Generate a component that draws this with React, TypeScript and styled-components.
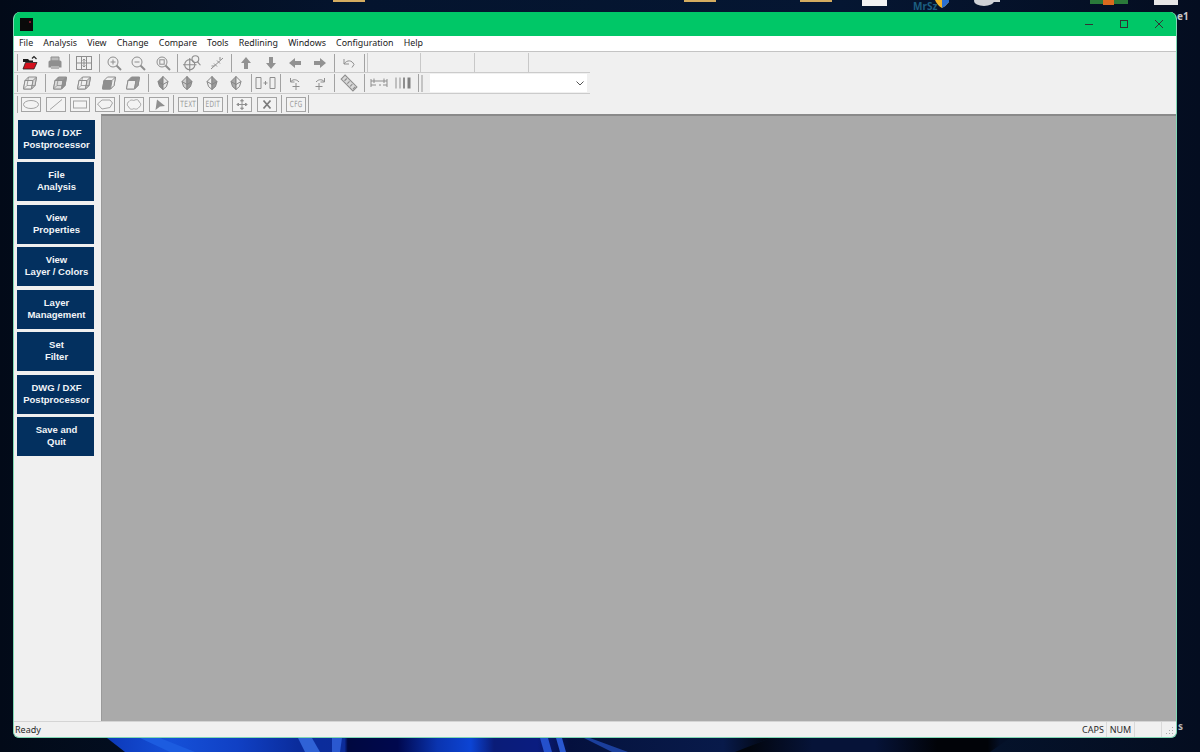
import React from "react";
import styled, { createGlobalStyle } from "styled-components";

const Global = createGlobalStyle`
  html, body { margin: 0; padding: 0; height: 100%; background: #040f26; overflow: hidden; }
  #root { height: 100%; }
`;

const Desktop = styled.div`
  position: relative;
  width: 1200px;
  height: 752px;
  box-sizing: border-box;
  padding: 12px 23px 14px 13px;
  background: linear-gradient(90deg, #020a18 0%, #04142e 30%, #051632 70%, #040d20 100%);
  overflow: hidden;
  font-family: "Noto Sans", "Open Sans", sans-serif;
`;

const DesktopArt = styled.svg`
  position: absolute;
  left: 0;
  top: 0;
  width: 1200px;
  height: 752px;
`;

const DesktopLabel = styled.span<{ $x: number; $y: number; $c: string }>`
  position: absolute;
  left: ${(p) => p.$x}px;
  top: ${(p) => p.$y}px;
  color: ${(p) => p.$c};
  font-size: 10px;
  line-height: 10px;
  font-weight: 700;
`;

const Window = styled.div`
  position: relative;
  height: 100%;
  display: flex;
  flex-direction: column;
  box-sizing: border-box;
  border: 1px solid #7fd8b4;
  border-top: 0;
  border-radius: 7px 7px 6px 6px;
  background: #f0f0f0;
  overflow: hidden;
`;

const TitleBar = styled.div`
  height: 24px;
  flex: none;
  background: #00c767;
  display: flex;
  align-items: center;
  padding-left: 6px;
`;

const AppLogo = styled.svg`
  width: 13px;
  height: 13px;
`;

const WinButtons = styled.div`
  margin-left: auto;
  display: flex;
`;

const WinButton = styled.div`
  width: 35px;
  height: 24px;
  display: flex;
  align-items: center;
  justify-content: center;
  svg { width: 10px; height: 10px; }
`;

const MenuBar = styled.div`
  height: 15px;
  flex: none;
  background: #fff;
  border-bottom: 1px solid #c4c4c4;
  display: flex;
  align-items: center;
  padding-left: 5px;
  gap: 10.2px;
`;

const MenuItem = styled.span`
  font-size: 8.85px;
  line-height: 15px;
  color: #222;
`;

const ToolRow = styled.div<{ $w?: number; $lined?: boolean; $h: number; $top?: number }>`
  height: ${(p) => p.$h}px;
  width: ${(p) => (p.$w ? `${p.$w}px` : "auto")};
  flex: none;
  box-sizing: border-box;
  display: flex;
  align-items: center;
  padding-left: 3px;
  padding-top: ${(p) => p.$top ?? 0}px;
  border-top: ${(p) => (p.$lined ? "1px solid #cbcbcb" : "0")};
  border-bottom: ${(p) => (p.$lined ? "1px solid #cbcbcb" : "0")};
`;

const Handle = styled.div<{ $gap?: number }>`
  width: 1px;
  height: 17px;
  flex: none;
  background: #a8a8a8;
  margin-right: ${(p) => p.$gap ?? 0}px;
`;

const Slot = styled.div`
  width: 24.5px;
  height: 20px;
  flex: none;
  display: flex;
  align-items: center;
  justify-content: center;
  svg { width: 16px; height: 16px; display: block; overflow: visible; }
`;

const Sep = styled.div<{ $tight?: boolean }>`
  width: 5px;
  height: 18px;
  flex: none;
  display: flex;
  justify-content: center;
  margin-left: ${(p) => (p.$tight ? "-2.5px" : "0")};
  &::before { content: ""; width: 1px; background: #a2a2a2; }
`;

const BoxButton = styled.div`
  width: 20px;
  height: 15px;
  box-sizing: border-box;
  border: 1px solid #a4a4a4;
  background: #f3f3f3;
  display: flex;
  align-items: center;
  justify-content: center;
  svg { width: 18px; height: 13px; }
`;

const BoxLabel = styled.span`
  color: #9a9a9a;
  font-family: "DejaVu Sans Condensed", "DejaVu Sans", sans-serif;
  font-size: 6.5px;
  line-height: 8px;
  letter-spacing: 0.3px;
  display: inline-block;
  transform: scaleY(1.3);
`;

const PaneBox = styled.div<{ $first?: boolean }>`
  width: 54px;
  height: 19px;
  flex: none;
  box-sizing: border-box;
  border-right: 1px solid #c8c8c8;
  border-left: ${(p) => (p.$first ? "1px solid #c8c8c8" : "0")};
`;

const Combo = styled.div`
  width: 157px;
  height: 18px;
  flex: none;
  margin-left: 7.5px;
  background: #fff;
  display: flex;
  align-items: center;
  justify-content: flex-end;
  padding-right: 2px;
  box-sizing: border-box;
  svg { width: 10px; height: 10px; }
`;

const Grip = styled.div`
  width: 2px;
  height: 17px;
  flex: none;
  background: #c4c4c4;
`;

const Workspace = styled.div`
  flex: 1;
  min-height: 0;
  display: flex;
`;

const Sidebar = styled.div`
  width: 87px;
  flex: none;
  box-sizing: border-box;
  padding: 5.75px 0 0 3px;
  display: flex;
  flex-direction: column;
  gap: 3.5px;
`;

const SideButton = styled.div<{ $shift?: boolean }>`
  width: 77px;
  height: 39px;
  flex: none;
  box-sizing: border-box;
  margin-left: ${(p) => (p.$shift ? "1px" : "0")};
  padding: 0 0 1px ${(p) => (p.$shift ? "0" : "2px")};
  background: #03305f;
  color: #f2f5f8;
  display: flex;
  align-items: center;
  justify-content: center;
  text-align: center;
  font-family: "Liberation Sans", Arial, sans-serif;
  font-weight: 700;
  font-size: 9.5px;
  line-height: 12px;
`;

const Canvas = styled.div`
  flex: 1;
  background: #aaaaaa;
  border-top: 2px solid #8a8a8a;
  border-left: 1px solid #9a9a9a;
`;

const StatusBar = styled.div`
  height: 16px;
  flex: none;
  box-sizing: border-box;
  border-top: 1px solid #d4d4d4;
  display: flex;
  align-items: center;
  padding-left: 1px;
  position: relative;
`;

const StatusText = styled.span`
  font-size: 9px;
  line-height: 15px;
  color: #2a2a2a;
`;

const StatusSpacer = styled.div`
  flex: 1;
`;

const StatusPane = styled.div<{ $w: number; $end?: number }>`
  width: ${(p) => p.$w}px;
  height: 15px;
  flex: none;
  box-sizing: border-box;
  border-right: 1px solid #d9d9d9;
  margin-right: ${(p) => p.$end ?? 0}px;
  display: flex;
  align-items: center;
  justify-content: center;
`;

const Resize = styled.svg`
  position: absolute;
  right: 2px;
  bottom: 2px;
  width: 10px;
  height: 10px;
`;

const g = "#8e8e8e";
const S = { fill: "none", stroke: g, strokeWidth: 1 };
const MagBase = ({ children }: { children?: React.ReactNode }) => (
  <svg viewBox="0 0 16 16">
    <circle cx="7" cy="7" r="5" {...S} />
    <path d="M10.5 10.5L15 15" stroke={g} strokeWidth="2" />
    {children}
  </svg>
);
const Cube = ({ a, b, c, wire }: { a: string; b: string; c: string; wire?: boolean }) => (
  <svg viewBox="0 0 16 16">
    <path d="M3 5.5L6.5 2H14.5L13 10.5L9.5 14H1.5Z" fill={a} stroke={g} />
    <path d="M3 5.5H11L9.5 14H1.5Z" fill={b} stroke={g} />
    <path d="M11 5.5L14.5 2L13 10.5L9.5 14Z" fill={c} stroke={g} />
    {wire && <path d="M6.5 2L5 10.5H13M5 10.5L1.5 14" fill="none" stroke={g} strokeWidth="0.8" />}
  </svg>
);
const Gem = ({ l, r }: { l: string; r: string }) => (
  <svg viewBox="0 0 16 16">
    <path d="M8 1.5L3 6.5L4.5 11.5L8 14.5Z" fill={l} stroke="#858585" />
    <path d="M8 1.5L13 6.5L11.5 11.5L8 14.5Z" fill={r} stroke="#858585" />
    <path d="M3 6.5L8 9.5L13 6.5" fill="none" stroke="#858585" />
  </svg>
);
const Arrow = ({ r }: { r: number }) => (
  <svg viewBox="0 0 16 16">
    <path transform={`rotate(${r} 8 8)`} d="M8 2L13 8H10V14H6V8H3Z" fill="#929292" />
  </svg>
);

const row1 = [
  <svg viewBox="0 0 16 16">
    <path d="M1 4H6L7.5 5.5H11V7H1Z" fill="#1b1b1b" />
    <path d="M1 14L3.5 7.5H15L12 14Z" fill="#d4111e" stroke="#222" strokeWidth="0.8" />
    <path d="M10 3.5L12 1.5L14.5 4" fill="none" stroke="#222" strokeWidth="1.2" />
  </svg>,
  <svg viewBox="0 0 16 16">
    <path d="M4 2H12V6H4Z" fill="#bbb" stroke={g} />
    <path d="M1.5 7Q1.5 5.5 3 5.5H13Q14.5 5.5 14.5 7V12.5H1.5Z" fill="#8f8f8f" />
    <path d="M4 11H12V14H4Z" fill="#b5b5b5" />
  </svg>,
  "sep",
  <svg viewBox="0 0 16 16">
    <rect x="0.5" y="1.5" width="15" height="13" fill="none" stroke={g} />
    <path d="M5.5 1.5V14.5M10.5 1.5V14.5M0.5 8H15.5M8 4V12M8 4L6.5 5.5M8 4L9.5 5.5M8 12L6.5 10.5M8 12L9.5 10.5" {...S} />
  </svg>,
  "sep",
  <MagBase><path d="M4.5 7H9.5M7 4.5V9.5" {...S} /></MagBase>,
  <MagBase><path d="M4.5 7H9.5" {...S} /></MagBase>,
  <MagBase><rect x="4.8" y="4.8" width="4.4" height="4.4" {...S} /></MagBase>,
  "sep",
  <svg viewBox="0 0 16 16" style={{ width: 22, height: 18 }}>
    <circle cx="6" cy="9.5" r="4.5" {...S} />
    <path d="M6 3.5V15.5M0 9.5H12" {...S} />
    <circle cx="11" cy="4.5" r="3" {...S} />
    <path d="M13 7L15.5 10" {...S} />
  </svg>,
  <svg viewBox="0 0 16 16">
    <path d="M2 14L14 3" {...S} />
    <path d="M5 8.5L8 11.5M8 5.5L11 8.5" {...S} />
    <path d="M2.5 11H5.5M11 2V5" {...S} />
  </svg>,
  "sep",
  <Arrow r={0} />,
  <Arrow r={180} />,
  <Arrow r={270} />,
  <Arrow r={90} />,
  "sep",
  <svg viewBox="0 0 16 16">
    <path d="M3 4V9H8M3 9C6 4.5 11 5 13 9.5L11 12.5" {...S} />
  </svg>,
  "sep",
];

const row2 = [
  <Cube a="#e4e4e4" b="#eeeeee" c="#d8d8d8" wire />,
  "sep",
  <Cube a="#9a9a9a" b="#dcdcdc" c="#909090" wire />,
  <Cube a="#f0f0f0" b="#f0f0f0" c="#d0d0d0" wire />,
  <Cube a="#f0f0f0" b="#8f8f8f" c="#eeeeee" />,
  <Cube a="#8f8f8f" b="#eeeeee" c="#999999" />,
  "sep",
  <Gem l="#8e8e8e" r="#e6e6e6" />,
  <Gem l="#cfcfcf" r="#9a9a9a" />,
  <Gem l="#eeeeee" r="#9a9a9a" />,
  <Gem l="#aaaaaa" r="#eeeeee" />,
  "sep",
  <svg viewBox="0 0 24 16" style={{ width: 24, height: 16 }}>
    <path d="M2 2.5H7V13.5H2ZM16 2.5H21V13.5H16ZM11.5 6V10M9.5 8H13.5" {...S} />
  </svg>,
  "sep",
  <svg viewBox="0 0 16 16">
    <path d="M3.5 3V7H7.5M3.5 7C5 4.5 9 3.5 12 7M9 8V15M5.5 11.5H12.5" {...S} />
  </svg>,
  <svg viewBox="0 0 16 16">
    <path d="M12.5 3V7H8.5M12.5 7C11 4.5 7 3.5 4 7M7 8V15M3.5 11.5H10.5" {...S} />
  </svg>,
  "sep",
  <svg viewBox="0 0 16 16" style={{ width: 18, height: 18 }}>
    <path d="M1 4.5L4.5 1L15 11.5L11.5 15Z" fill="#d8d8d8" stroke={g} />
    <path d="M4 6L6 4M6.5 8.5L8.5 6.5M9 11L11 9M11.5 13.5L13.5 11.5" stroke={g} />
  </svg>,
  "sep",
  <svg viewBox="0 0 20 16" style={{ width: 20, height: 16 }}>
    <path d="M2 4V12M18 4V12M2 6H18M2 10H7M10 10H12M14 10H18M5 3.5V8M15 3.5V8" stroke={g} fill="none" />
  </svg>,
  <svg viewBox="0 0 20 16" style={{ width: 20, height: 16 }}>
    <path d="M3 2.5V13.5M7 2.5V13.5" stroke={g} strokeWidth="1" />
    <path d="M11 2.5V13.5" stroke={g} strokeWidth="2" />
    <path d="M16 2.5V13.5" stroke="#808080" strokeWidth="3" />
  </svg>,
  "sep",
];

const L = { fill: "none", stroke: "#a4a4a4", strokeWidth: 1 };
const row3 = [
  <svg viewBox="0 0 18 13"><ellipse cx="9" cy="6.5" rx="7.5" ry="4" {...L} /></svg>,
  <svg viewBox="0 0 18 13"><path d="M3 11.5L15 1.5" {...L} /></svg>,
  <svg viewBox="0 0 18 13"><rect x="2.5" y="3" width="13" height="7" {...L} /></svg>,
  <svg viewBox="0 0 18 13"><path d="M1.5 6L6 2H14L16.5 5L14 9.5L6 11Z" {...L} /></svg>,
  "sep",
  <svg viewBox="0 0 18 13"><path d="M4 3.5C6 1 8 2.5 9 2.5C11 1 14 1.5 14 4C16.5 5 16 8.5 14 9C13 11.5 10 11.5 9 10.5C7 12 4 11 4 9C1.5 8 2 4.5 4 3.5Z" {...L} /></svg>,
  <svg viewBox="0 0 18 13"><path d="M7 1.5L15 8L10 8.5L5.5 12Z" fill="#8f8f8f" /></svg>,
  "sep",
  <BoxLabel>TEXT</BoxLabel>,
  <BoxLabel>EDIT</BoxLabel>,
  "sep",
  <svg viewBox="0 0 18 13"><path d="M9 1.5V11.5M4 6.5H14M9 1.5L7.5 3H10.5ZM9 11.5L7.5 10H10.5ZM4 6.5L5.5 5V8ZM14 6.5L12.5 5V8Z" fill="#909090" stroke="#909090" strokeWidth="1" /></svg>,
  <svg viewBox="0 0 18 13"><path d="M5.5 2.5L12.5 10.5M12.5 2.5L5.5 10.5" stroke="#7c7c7c" strokeWidth="1.8" /></svg>,
  "sep",
  <BoxLabel>CFG</BoxLabel>,
  "end",
];

const renderRow = (items: React.ReactNode[], boxed = false) =>
  items.map((it, i) =>
    it === "sep" || it === "end" ? (
      <Sep key={i} $tight={it === "end"} />
    ) : (
      <Slot key={i}>{boxed ? <BoxButton>{it}</BoxButton> : it}</Slot>
    )
  );

const menu = ["File", "Analysis", "View", "Change", "Compare", "Tools", "Redlining", "Windows", "Configuration", "Help"];
const side = [
  ["DWG / DXF", "Postprocessor"],
  ["File", "Analysis"],
  ["View", "Properties"],
  ["View", "Layer / Colors"],
  ["Layer", "Management"],
  ["Set", "Filter"],
  ["DWG / DXF", "Postprocessor"],
  ["Save and", "Quit"],
];

export default function App() {
  return (
    <Desktop>
      <Global />
      <DesktopArt viewBox="0 0 1200 752">
        <defs>
          <linearGradient id="wave" gradientUnits="userSpaceOnUse" x1="105" y1="0" x2="770" y2="0">
            <stop offset="0" stopColor="#0c38b8" />
            <stop offset="0.1" stopColor="#1550d8" />
            <stop offset="0.2" stopColor="#1040c4" />
            <stop offset="0.29" stopColor="#0a2c9c" />
            <stop offset="0.36" stopColor="#0c2c9a" />
            <stop offset="0.365" stopColor="#000840" />
            <stop offset="0.44" stopColor="#00084e" />
            <stop offset="0.5" stopColor="#0a34b0" />
            <stop offset="0.55" stopColor="#0c44d4" />
            <stop offset="0.585" stopColor="#0a1c78" />
            <stop offset="0.65" stopColor="#0a1c80" />
            <stop offset="0.7" stopColor="#04103e" />
            <stop offset="0.77" stopColor="#061542" />
            <stop offset="0.93" stopColor="#081a4a" />
            <stop offset="1" stopColor="#02060f" />
          </linearGradient>
          <linearGradient id="wave2" gradientUnits="userSpaceOnUse" x1="750" y1="0" x2="1000" y2="0">
            <stop offset="0" stopColor="#02060f" />
            <stop offset="0.25" stopColor="#061338" />
            <stop offset="0.5" stopColor="#061338" />
            <stop offset="0.75" stopColor="#010308" />
            <stop offset="0.95" stopColor="#010308" />
            <stop offset="1" stopColor="#040f26" />
          </linearGradient>
        </defs>
        <rect x="333" y="0" width="32" height="2" fill="#d4ac60" />
        <rect x="684" y="0" width="32" height="2" fill="#d4ac60" />
        <rect x="800" y="0" width="32" height="2" fill="#d4ac60" />
        <rect x="862" y="0" width="25" height="6" fill="#f2f2f2" />
        <path d="M935 0H949V2Q946 6 942 8Q937 5 935 0Z" fill="#f0b429" />
        <path d="M942 0H949V2Q946 6 942 8Z" fill="#2a6fd0" />
        <ellipse cx="984" cy="1" rx="10" ry="5" fill="#cfd2d6" />
        <rect x="992" y="0" width="8" height="2" fill="#cfd2d6" />
        <rect x="1090" y="0" width="38" height="4" fill="#2a7a3a" />
        <rect x="1103" y="0" width="11" height="5" fill="#d9691e" />
        <rect x="1154" y="0" width="24" height="5" fill="#e6e6e6" />
        <path d="M107 738H770L735 752H125Z" fill="url(#wave)" />
        <path d="M735 752L770 738H1010L990 752Z" fill="url(#wave2)" />
        <path d="M140 738H160L195 752H170Z" fill="#1c5ce0" />
        <path d="M298 738H312L320 752H305Z" fill="#2f62d6" />
        <path d="M332 738H342L340 752H332Z" fill="#2a58d0" />
        <path d="M540 738H548L552 752H544Z" fill="#2450cc" />
        <path d="M556 738H562L566 752H560Z" fill="#2a58d0" />
        <path d="M590 738L628 752H612L584 738Z" fill="#1b3f9c" />
      </DesktopArt>
      <DesktopLabel $x={913} $y={1} $c="#1d5f80">MrSz</DesktopLabel>
      <DesktopLabel $x={1177} $y={11} $c="#c8c8c8">e1</DesktopLabel>
      <DesktopLabel $x={1178} $y={721} $c="#b8b8b8">s</DesktopLabel>
      <Window>
        <TitleBar>
          <AppLogo viewBox="0 0 13 13">
            <rect width="13" height="13" fill="#0a0a0a" />
            <rect x="9" y="3" width="2" height="2" fill="#7a1f2a" />
          </AppLogo>
          <WinButtons>
            <WinButton>
              <svg viewBox="0 0 10 10"><path d="M1 5.5H9" stroke="#333" /></svg>
            </WinButton>
            <WinButton>
              <svg viewBox="0 0 10 10"><rect x="1.5" y="1.5" width="7" height="7" fill="none" stroke="#333" /></svg>
            </WinButton>
            <WinButton>
              <svg viewBox="0 0 10 10"><path d="M1 1L9 9M9 1L1 9" stroke="#333" /></svg>
            </WinButton>
          </WinButtons>
        </TitleBar>
        <MenuBar>
          {menu.map((m) => (
            <MenuItem key={m}>{m}</MenuItem>
          ))}
        </MenuBar>
        <ToolRow $h={20} $top={1}>
          <Handle />
          {renderRow(row1)}
          <PaneBox $first />
          <PaneBox />
          <PaneBox />
        </ToolRow>
        <ToolRow $h={22} $w={576} $lined>
          <Handle />
          {renderRow(row2)}
          <Grip />
          <Combo>
            <svg viewBox="0 0 10 10"><path d="M1.5 3.5L5 7L8.5 3.5" fill="none" stroke="#555" /></svg>
          </Combo>
        </ToolRow>
        <ToolRow $h={20}>
          <Handle $gap={1} />
          {renderRow(row3, true)}
        </ToolRow>
        <Workspace>
          <Sidebar>
            {side.map(([a, b], i) => (
              <SideButton key={i} $shift={i === 0}>
                {a}
                <br />
                {b}
              </SideButton>
            ))}
          </Sidebar>
          <Canvas />
        </Workspace>
        <StatusBar>
          <StatusText>Ready</StatusText>
          <StatusSpacer />
          <StatusPane $w={27}><StatusText>CAPS</StatusText></StatusPane>
          <StatusPane $w={28}><StatusText>NUM</StatusText></StatusPane>
          <StatusPane $w={27} $end={14} />
          <Resize viewBox="0 0 10 10">
            <path d="M8 2h1v1H8zM5 5h1v1H5zM8 5h1v1H8zM2 8h1v1H2zM5 8h1v1H5zM8 8h1v1H8z" fill="#a8a8a8" />
          </Resize>
        </StatusBar>
      </Window>
    </Desktop>
  );
}
